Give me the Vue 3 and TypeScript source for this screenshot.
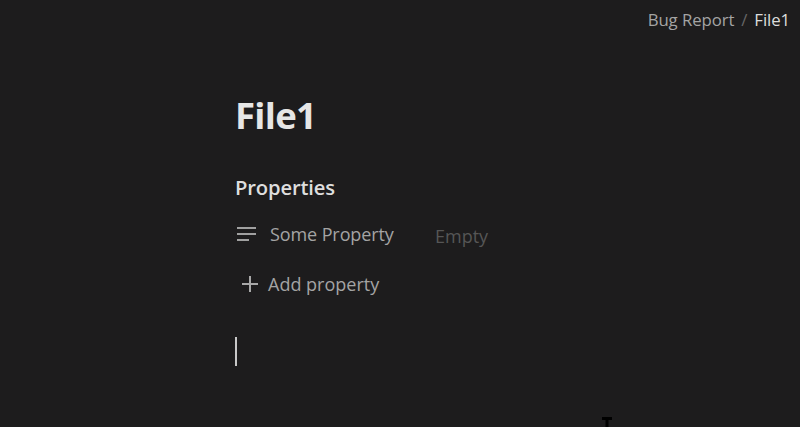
<script setup lang="ts">
const crumbs: string[] = ['Bug Report']
const current = 'File1'
</script>

<template>
  <div class="page">
    <header class="topbar">
      <span v-for="c in crumbs" :key="c" class="crumb">{{ c }}</span>
      <span class="sep">/</span>
      <span class="current">{{ current }}</span>
    </header>
    <main class="doc">
      <h1 class="title">{{ current }}</h1>
      <h2 class="heading">Properties</h2>
      <div class="prop">
        <svg class="lines" width="22" height="16" viewBox="0 0 22 16" fill="none" stroke="#a0a0a0" stroke-width="2.2">
          <path d="M1 2H20M1 8H20M1 14H13" />
        </svg>
        <span class="prop-name">Some Property</span>
        <span class="prop-value">Empty</span>
      </div>
      <div class="add">
        <svg class="plus" width="16" height="16" viewBox="0 0 16 16" fill="none" stroke="#a8a8a8" stroke-width="2">
          <path d="M8 0V16M0 8H16" />
        </svg>
        <span>Add property</span>
      </div>
      <div class="caret"></div>
    </main>
    <svg class="ibeam" width="12" height="10" viewBox="0 0 12 10" fill="none" stroke="#000" stroke-width="3">
      <path d="M1 1.5H11M6 1V10" />
    </svg>
  </div>
</template>

<style scoped>
.page {
  position: relative;
  width: 800px;
  height: 427px;
  overflow: hidden;
  background: #1d1c1d;
  font-family: "Open Sans", "Noto Sans", sans-serif;
  color: #d4d4d4;
}
.topbar {
  display: flex;
  justify-content: flex-end;
  align-items: center;
  gap: 7px;
  height: 20px;
  padding: 9px 10px 0 0;
  font-size: 16.8px;
  letter-spacing: -0.1px;
}
.crumb { color: #a4a4a4; }
.sep { color: #666; }
.current { color: #dcdcdc; font-weight: 500; }
.doc {
  display: flex;
  flex-direction: column;
  align-items: flex-start;
  padding: 1px 0 0 235px;
}
.title {
  margin: 62px 0 0;
  font-size: 36.5px;
  line-height: 46px;
  font-weight: 700;
  letter-spacing: -0.7px;
  color: #e6e6e6;
}
.heading {
  margin: 36px 0 0;
  font-size: 20.2px;
  line-height: 26px;
  font-weight: 600;
  letter-spacing: -0.15px;
  color: #dedede;
}
.prop {
  display: flex;
  align-items: center;
  height: 24px;
  margin-top: 22px;
  padding-left: 1px;
  font-size: 18px;
}
.lines { flex: none; margin-right: 12px; }
.prop-name { width: 165px; color: #a4a4a4; letter-spacing: -0.1px; }
.prop-value { color: #565656; padding-top: 4px; }
.add {
  display: flex;
  align-items: center;
  gap: 10px;
  margin-top: 26px;
  padding-left: 7px;
  height: 24px;
  font-size: 18px;
  color: #a4a4a4;
}
.plus { flex: none; }
.caret {
  width: 2px;
  height: 29px;
  margin-top: 41px;
  background: #c8c8c8;
}
.ibeam {
  position: absolute;
  left: 601px;
  top: 417px;
}
</style>
